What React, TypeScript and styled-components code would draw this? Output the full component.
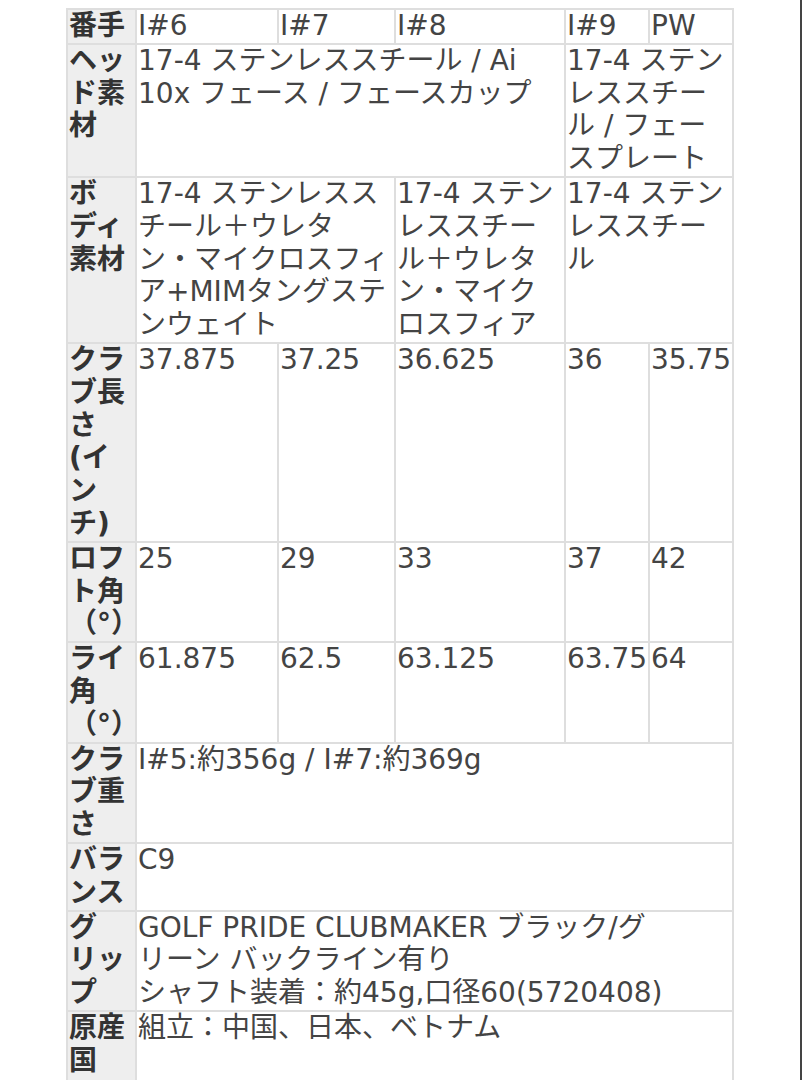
import React from 'react'
import styled, { createGlobalStyle } from 'styled-components'

type Cell = { lines: string[]; span?: number }
type Spec = { label: string[]; cells: Cell[] }

// line breaks follow the original layout so the wrapping stays the same
const specs: Spec[] = [
  {
    label: ['番手'],
    cells: [{ lines: ['I#6'] }, { lines: ['I#7'] }, { lines: ['I#8'] }, { lines: ['I#9'] }, { lines: ['PW'] }],
  },
  {
    label: ['ヘッ', 'ド素', '材'],
    cells: [
      { lines: ['17-4 ステンレススチール / Ai', '10x フェース / フェースカップ'], span: 3 },
      { lines: ['17-4 ステン', 'レススチー', 'ル / フェー', 'スプレート'], span: 2 },
    ],
  },
  {
    label: ['ボ', 'ディ', '素材'],
    cells: [
      { lines: ['17-4 ステンレスス', 'チール＋ウレタ', 'ン・マイクロスフィ', 'ア+MIMタングステ', 'ンウェイト'], span: 2 },
      { lines: ['17-4 ステン', 'レススチー', 'ル＋ウレタ', 'ン・マイク', 'ロスフィア'] },
      { lines: ['17-4 ステン', 'レススチー', 'ル'], span: 2 },
    ],
  },
  {
    label: ['クラ', 'ブ長', 'さ', '(イ', 'ン', 'チ)'],
    cells: [{ lines: ['37.875'] }, { lines: ['37.25'] }, { lines: ['36.625'] }, { lines: ['36'] }, { lines: ['35.75'] }],
  },
  {
    label: ['ロフ', 'ト角', '（°）'],
    cells: [{ lines: ['25'] }, { lines: ['29'] }, { lines: ['33'] }, { lines: ['37'] }, { lines: ['42'] }],
  },
  {
    label: ['ライ', '角', '（°）'],
    cells: [{ lines: ['61.875'] }, { lines: ['62.5'] }, { lines: ['63.125'] }, { lines: ['63.75'] }, { lines: ['64'] }],
  },
  {
    label: ['クラ', 'ブ重', 'さ'],
    cells: [{ lines: ['I#5:約356g / I#7:約369g'], span: 5 }],
  },
  {
    label: ['バラ', 'ンス'],
    cells: [{ lines: ['C9'], span: 5 }],
  },
  {
    label: ['グ', 'リッ', 'プ'],
    cells: [
      {
        lines: ['GOLF PRIDE CLUBMAKER ブラック/グ', 'リーン バックライン有り', 'シャフト装着：約45g,口径60(5720408)'],
        span: 5,
      },
    ],
  },
  {
    label: ['原産', '国'],
    cells: [{ lines: ['組立：中国、日本、ベトナム'], span: 5 }],
  },
]

const colWidths = [69, 142, 117, 170, 84, 84]

const Lines: React.FC<{ lines: string[] }> = ({ lines }) => (
  <>
    {lines.map((line, i) => (
      <React.Fragment key={i}>
        {i > 0 && <br />}
        {line}
      </React.Fragment>
    ))}
  </>
)

export default function App() {
  return (
    <Page>
      <GlobalStyle />
      <SpecTable>
        <colgroup>
          {colWidths.map((w, i) => (
            <Col key={i} $width={w} />
          ))}
        </colgroup>
        <tbody>
          {specs.map((spec, r) => (
            <tr key={r}>
              <Label>
                <Lines lines={spec.label} />
              </Label>
              {spec.cells.map((cell, c) => (
                <Value key={c} colSpan={cell.span ?? 1}>
                  <Lines lines={cell.lines} />
                </Value>
              ))}
            </tr>
          ))}
        </tbody>
      </SpecTable>
    </Page>
  )
}

const GlobalStyle = createGlobalStyle`
  html, body {
    margin: 0;
    padding: 0;
    background: #fff;
  }
  body {
    font-family: "DejaVu Sans", "Noto Sans CJK JP", sans-serif;
  }
`

const Page = styled.div`
  box-sizing: border-box;
  width: 802px;
  height: 100vh;
  padding: 8px 0 0 66px;
  border-right: 2px solid #444;
  overflow: hidden;
`

const SpecTable = styled.table`
  table-layout: fixed;
  width: 668px;
  border-collapse: collapse;
  font-size: 28px;
  line-height: 32.8px;
  color: #333;

  tr:last-child > * {
    padding-bottom: 6px;
  }
`

const Col = styled.col<{ $width: number }>`
  width: ${(p) => p.$width}px;
`

const Label = styled.th`
  background: #eeeeee;
  border: 2px solid #dedede;
  padding: 0 1px;
  vertical-align: top;
  text-align: left;
  font-weight: 700;
  white-space: nowrap;
  color: #333;
`

const Value = styled.td`
  background: #fff;
  border: 2px solid #dedede;
  padding: 0 1px;
  vertical-align: top;
  text-align: left;
  font-weight: 400;
  white-space: nowrap;
  color: #444;
`
